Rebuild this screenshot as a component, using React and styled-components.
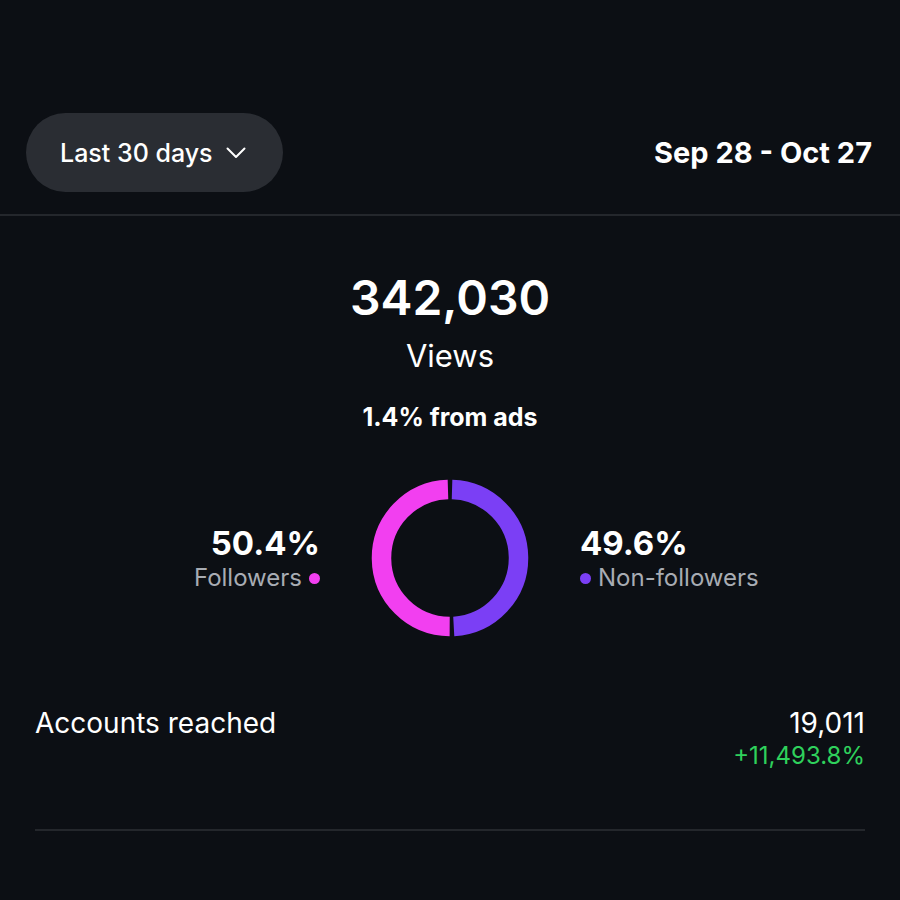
import React from "react";
import styled, { createGlobalStyle } from "styled-components";

const GlobalStyle = createGlobalStyle`
  html, body {
    margin: 0;
    padding: 0;
    background: #0c0f14;
  }
  body {
    font-family: "Inter", "Noto Sans", sans-serif;
    color: #ffffff;
    -webkit-font-smoothing: antialiased;
  }
`;

const Page = styled.div`
  width: 900px;
  height: 900px;
  background: #0c0f14;
  overflow: hidden;
`;

const Header = styled.div`
  display: flex;
  align-items: center;
  justify-content: space-between;
  padding: 113px 28px 0 26px;
`;

const RangeButton = styled.button`
  display: flex;
  align-items: center;
  gap: 13px;
  height: 79px;
  padding: 0 37px 0 34px;
  border: none;
  border-radius: 40px;
  background: #2a2d33;
  color: #ffffff;
  font-family: inherit;
  font-size: 25px;
  font-weight: 500;
  cursor: pointer;
`;

const DateRange = styled.div`
  font-size: 29px;
  font-weight: 700;
`;

const Divider = styled.hr`
  margin: ${(p) => p.$margin || "0"};
  border: none;
  height: 2px;
  background: #24272c;
`;

const Summary = styled.section`
  display: flex;
  flex-direction: column;
  align-items: center;
  padding-top: 52px;
`;

const BigNumber = styled.div`
  font-size: 48px;
  font-weight: 600;
  line-height: 60px;
`;

const Metric = styled.div`
  font-size: 31px;
  font-weight: 400;
  line-height: 40px;
  margin-top: 8px;
`;

const AdsNote = styled.div`
  font-size: 25px;
  font-weight: 700;
  line-height: 30px;
  margin-top: 26px;
`;

const Breakdown = styled.div`
  display: grid;
  grid-template-columns: 1fr 160px 1fr;
  align-items: center;
  column-gap: 50px;
  width: 100%;
  margin-top: 46px;
`;

const Share = styled.div`
  display: flex;
  flex-direction: column;
  align-items: ${(p) => (p.$right ? "flex-start" : "flex-end")};
  margin-top: 2px;
`;

const Percent = styled.div`
  font-size: 33px;
  font-weight: 700;
  line-height: 38px;
`;

const Legend = styled.div`
  display: flex;
  align-items: center;
  gap: 7px;
  font-size: 24px;
  color: #a8acb3;
  line-height: 32px;
`;

const Dot = styled.span`
  width: 11px;
  height: 11px;
  border-radius: 50%;
  background: ${(p) => p.$color};
`;

const StatRow = styled.div`
  display: flex;
  justify-content: space-between;
  align-items: flex-start;
  padding: 0 35px;
  margin-top: 67px;
`;

const StatLabel = styled.div`
  font-size: 28px;
  line-height: 36px;
`;

const StatValues = styled.div`
  display: flex;
  flex-direction: column;
  align-items: flex-end;
`;

const StatValue = styled.div`
  font-size: 28px;
  line-height: 36px;
`;

const StatChange = styled.div`
  font-size: 24px;
  line-height: 30px;
  color: #2fd15c;
`;

const PINK = "#f23ff0";
const PURPLE = "#7b3ff5";

function arc(cx, cy, r, startDeg, endDeg) {
  const toXY = (deg) => {
    const a = ((deg - 90) * Math.PI) / 180;
    return [cx + r * Math.cos(a), cy + r * Math.sin(a)];
  };
  const [x1, y1] = toXY(startDeg);
  const [x2, y2] = toXY(endDeg);
  const large = endDeg - startDeg > 180 ? 1 : 0;
  return `M ${x1} ${y1} A ${r} ${r} 0 ${large} 1 ${x2} ${y2}`;
}

const Donut = ({ followers }) => {
  const r = 68.5;
  const gap = 1.7;
  const split = 360 * (1 - followers / 100);
  return (
    <svg width="160" height="160" viewBox="0 0 160 160">
      <path d={arc(80, 80, r, gap, split - gap)} stroke={PURPLE} strokeWidth="19.5" fill="none" />
      <path d={arc(80, 80, r, split + gap, 360 - gap)} stroke={PINK} strokeWidth="19.5" fill="none" />
    </svg>
  );
};

const Chevron = () => (
  <svg width="20" height="12" viewBox="0 0 20 12" fill="none">
    <path d="M1.5 1.5 L10 10 L18.5 1.5" stroke="#fff" strokeWidth="2" strokeLinecap="round" strokeLinejoin="round" />
  </svg>
);

export default function App() {
  return (
    <Page>
      <GlobalStyle />
      <Header>
        <RangeButton>
          Last 30 days
          <Chevron />
        </RangeButton>
        <DateRange>Sep 28 - Oct 27</DateRange>
      </Header>
      <Divider $margin="22px 0 0 0" />
      <Summary>
        <BigNumber>342,030</BigNumber>
        <Metric>Views</Metric>
        <AdsNote>1.4% from ads</AdsNote>
        <Breakdown>
          <Share>
            <Percent>50.4%</Percent>
            <Legend>
              Followers
              <Dot $color={PINK} />
            </Legend>
          </Share>
          <Donut followers={50.4} />
          <Share $right>
            <Percent>49.6%</Percent>
            <Legend>
              <Dot $color={PURPLE} />
              Non-followers
            </Legend>
          </Share>
        </Breakdown>
      </Summary>
      <StatRow>
        <StatLabel>Accounts reached</StatLabel>
        <StatValues>
          <StatValue>19,011</StatValue>
          <StatChange>+11,493.8%</StatChange>
        </StatValues>
      </StatRow>
      <Divider $margin="58px 35px 0 35px" />
    </Page>
  );
}
